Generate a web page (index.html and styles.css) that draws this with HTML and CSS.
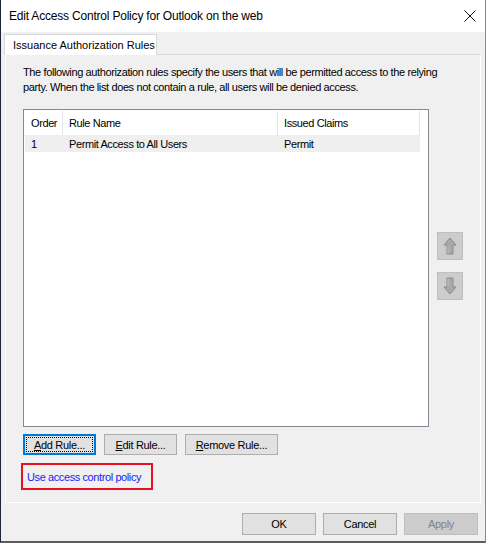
FILE: index.html
```html
<!DOCTYPE html>
<html lang="en">
<head>
    <meta charset="UTF-8">
    <title>Edit Access Control Policy for Outlook on the web</title>
    <link rel="stylesheet" href="styles.css">
</head>
<body>
    <div class="window">
        <div class="titlebar">
            <span class="title">Edit Access Control Policy for Outlook on the web</span>
            <svg class="close" width="12" height="12" viewBox="0 0 12 12">
                <path d="M0.5 0.5 L11.5 11.5 M11.5 0.5 L0.5 11.5" stroke="#111" stroke-width="1" fill="none"/>
            </svg>
        </div>

        <div class="client">
            <div class="tabs">
                <div class="tab">Issuance Authorization Rules</div>
            </div>

            <div class="page">
                <p class="intro">The following authorization rules specify the users that will be permitted access to the relying party. When the list does not contain a rule, all users will be denied access.</p>

                <div class="list-area">
                    <div class="listbox">
                        <div class="row head">
                            <div class="col order">Order</div>
                            <div class="col name">Rule Name</div>
                            <div class="col claims">Issued Claims</div>
                        </div>
                        <div class="row selected">
                            <div class="col order">1</div>
                            <div class="col name">Permit Access to All Users</div>
                            <div class="col claims">Permit</div>
                        </div>
                    </div>

                    <div class="movers">
                        <div class="mover">
                            <svg width="14" height="18" viewBox="0 0 14 18">
                                <path d="M7 1 L13 8 L10 8 L10 17 L4 17 L4 8 L1 8 Z" fill="#a9a9a9" stroke="#8a8a8a" stroke-width="1"/>
                                <path d="M5 9 L5 16" stroke="#c4c4c4" stroke-width="1"/>
                            </svg>
                        </div>
                        <div class="mover">
                            <svg width="14" height="18" viewBox="0 0 14 18">
                                <path d="M7 17 L13 10 L10 10 L10 1 L4 1 L4 10 L1 10 Z" fill="#a9a9a9" stroke="#8a8a8a" stroke-width="1"/>
                                <path d="M5 2 L5 9" stroke="#c4c4c4" stroke-width="1"/>
                            </svg>
                        </div>
                    </div>
                </div>

                <div class="rule-buttons">
                    <button class="btn focused"><span class="focus-ring"><u>A</u>dd Rule...</span></button>
                    <button class="btn"><u>E</u>dit Rule...</button>
                    <button class="btn wide"><u>R</u>emove Rule...</button>
                </div>

                <div class="policy">
                    <a href="#" class="policy-link">Use access control policy</a>
                </div>
            </div>

            <div class="footer">
                <button class="btn">OK</button>
                <button class="btn">Cancel</button>
                <button class="btn" disabled>Apply</button>
            </div>
        </div>
    </div>
</body>
</html>
```

FILE: styles.css
```css
body {
    margin: 0;
    background: #f0f0f0;
    font-family: "Liberation Sans", Arial, sans-serif;
    font-size: 11px;
    color: #000;
}
.window {
    width: 486px;
    height: 543px;
    box-sizing: border-box;
    display: flex;
    flex-direction: column;
    border-left: 1px solid #1c2636;
    border-right: 1px solid #8a8a8a;
    border-bottom: 2px solid #5c5c5c;
    background: #f0f0f0;
}
.titlebar {
    height: 32px;
    flex: none;
    background: #fff;
    display: flex;
    align-items: center;
    justify-content: space-between;
    padding: 0 9px 0 8px;
}
.title {
    font-size: 12px;
    letter-spacing: -0.2px;
    color: #000;
}
.close {
    display: block;
}
.client {
    flex: 1;
    display: flex;
    flex-direction: column;
    padding: 2px 4px 0 3px;
}
.tabs {
    display: flex;
    height: 20px;
}
.tab {
    width: 153px;
    box-sizing: border-box;
    background: #fff;
    border: 1px solid #d9d9d9;
    border-bottom: none;
    padding: 4px 0 0 8px;
    position: relative;
    z-index: 1;
    height: 21px;
}
.page {
    height: 449px;
    box-sizing: border-box;
    border: 1px solid #fff;
    border-top-color: #d9d9d9;
    margin-left: 1px;
    padding: 10px 0 0 17px;
    display: flex;
    flex-direction: column;
}
.intro {
    margin: 0;
    width: 436px;
    line-height: 15px;
    letter-spacing: -0.38px;
}
.list-area {
    display: flex;
    gap: 8px;
    margin-top: 14px;
}
.listbox {
    width: 406px;
    height: 318px;
    box-sizing: border-box;
    border: 1px solid #828790;
    background: #fff;
    padding: 1px 0 0 1px;
}
.row {
    display: flex;
    width: 395px;
    letter-spacing: -0.4px;
}
.row.head {
    height: 24px;
    align-items: center;
}
.row.selected {
    height: 17px;
    align-items: center;
    background: #efefef;
}
.col {
    box-sizing: border-box;
    padding-left: 6px;
    height: 100%;
    display: flex;
    align-items: center;
}
.col.order {
    width: 38px;
}
.col.name {
    width: 215px;
}
.col.claims {
    flex: 1;
}
.row.head .col {
    border-right: 1px solid #e5e5e5;
}
.movers {
    display: flex;
    flex-direction: column;
    gap: 12px;
    padding-top: 123px;
}
.mover {
    width: 26px;
    height: 28px;
    box-sizing: border-box;
    background: #cccccc;
    border: 1px solid #bfbfbf;
    display: flex;
    align-items: center;
    justify-content: center;
}
.rule-buttons {
    display: flex;
    gap: 8px;
    margin-top: 7px;
}
.btn {
    font-family: "Liberation Sans", Arial, sans-serif;
    font-size: 11px;
    letter-spacing: -0.3px;
    width: 73px;
    height: 21px;
    box-sizing: border-box;
    background: #e1e1e1;
    border: 1px solid #adadad;
    color: #000;
    padding: 0;
    display: flex;
    align-items: center;
    justify-content: center;
}
.btn.wide {
    width: 93px;
}
.btn.focused {
    border: 2px solid #0078d7;
    padding: 1px;
}
.focus-ring {
    flex: 1;
    align-self: stretch;
    border: 1px dotted #000;
    display: flex;
    align-items: center;
    justify-content: center;
}
.btn:disabled {
    background: #cccccc;
    border-color: #bfbfbf;
    color: #838383;
}
.policy {
    margin-top: 8px;
    margin-left: -2px;
    width: 132px;
    height: 27px;
    box-sizing: border-box;
    border: 2px solid #e81123;
    display: flex;
    align-items: center;
    padding-left: 4px;
}
.policy-link {
    color: #1a1aff;
    text-decoration: none;
    letter-spacing: -0.4px;
}
.footer {
    display: flex;
    justify-content: flex-end;
    gap: 7px;
    padding: 10px 3px 0 0;
}
.footer .btn {
    width: 74px;
    height: 22px;
}
```
